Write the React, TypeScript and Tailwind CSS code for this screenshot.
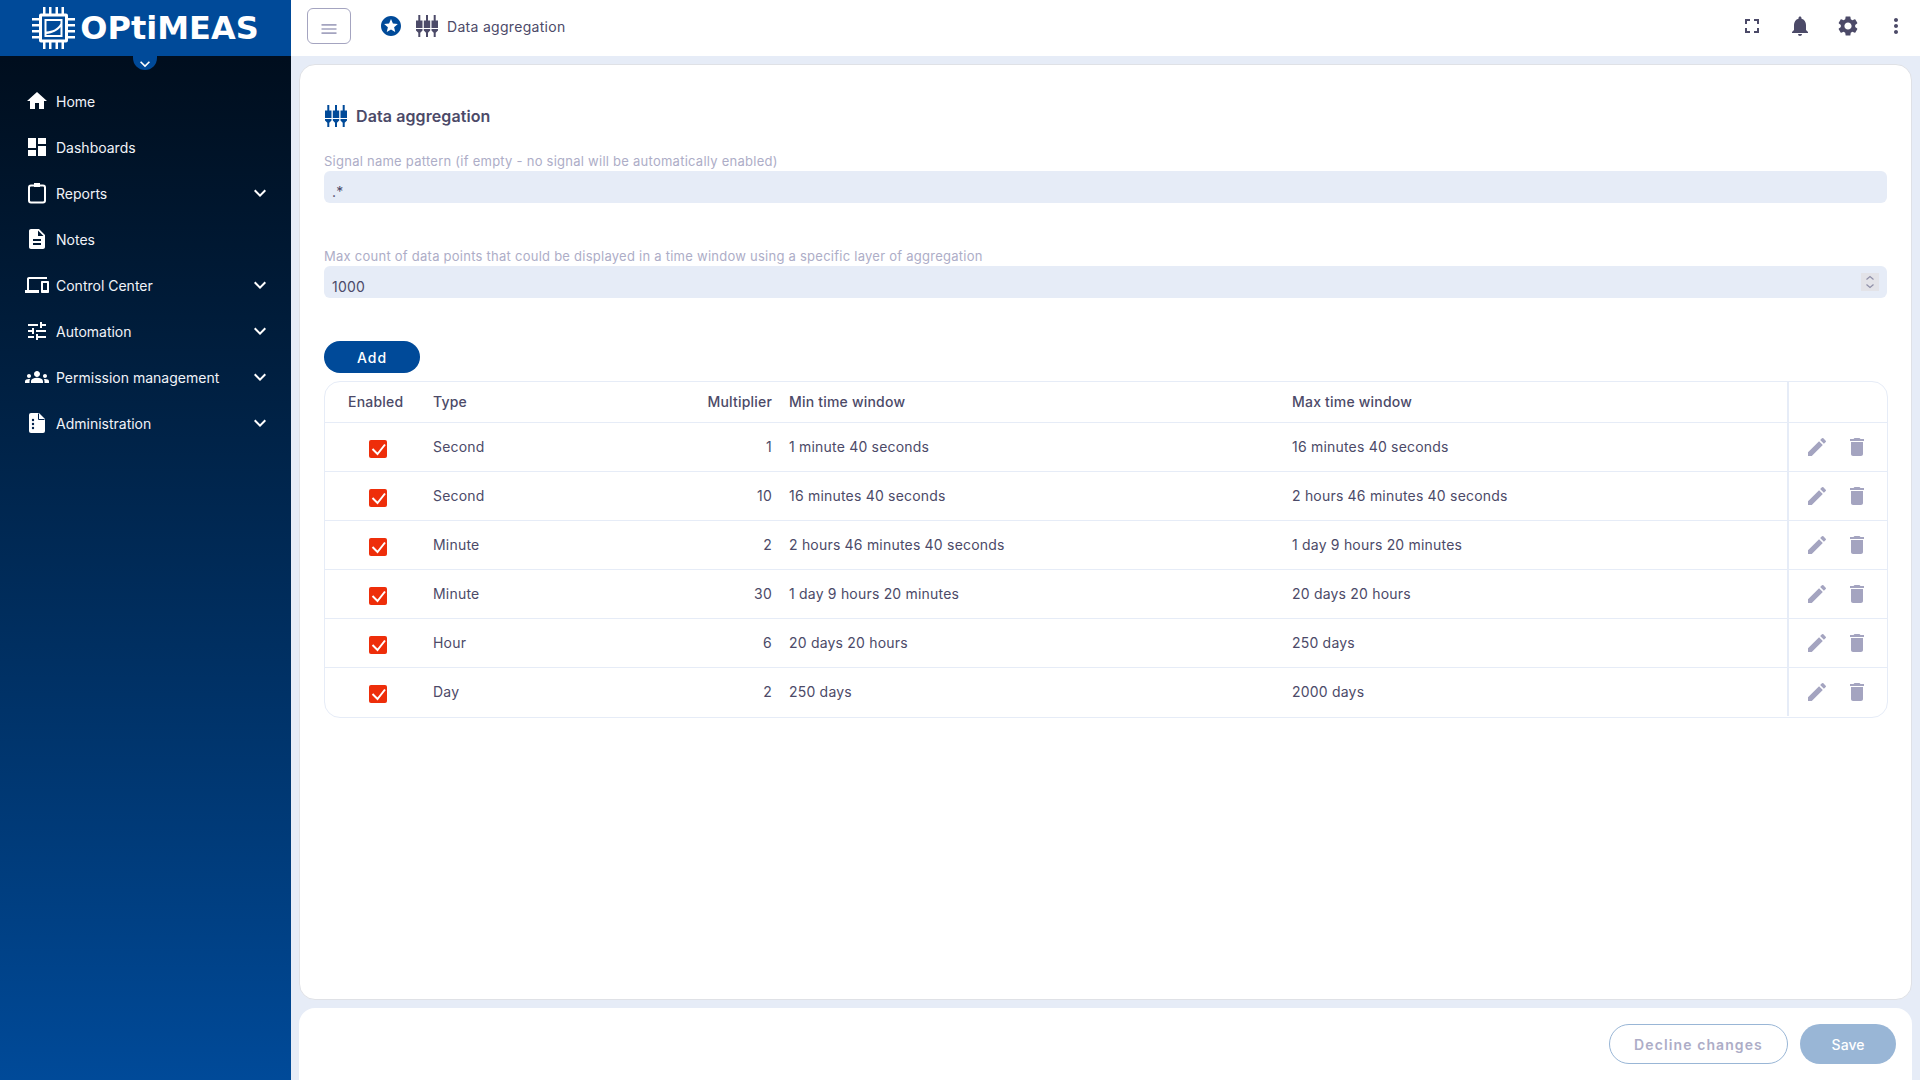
import { ReactNode } from "react";
import {
  MdDashboard,
  MdDelete,
  MdDescription,
  MdDevices,
  MdEdit,
  MdFullscreen,
  MdGroups,
  MdHome,
  MdKeyboardArrowDown,
  MdMenu,
  MdMoreVert,
  MdNotifications,
  MdSettings,
  MdStars,
  MdTune,
} from "react-icons/md";

const ReportsIcon = () => (
  <svg viewBox="0 0 24 24" className="w-6 h-6" fill="none" stroke="currentColor" strokeWidth="2">
    <rect x="4" y="4.5" width="16" height="17" rx="2" />
    <rect x="9.5" y="2.5" width="5" height="3" fill="currentColor" strokeWidth="1" />
  </svg>
);

const AdminIcon = () => (
  <svg viewBox="0 0 24 24" className="w-6 h-6" fill="currentColor">
    <path d="M6 2h8l6 6v12a2 2 0 0 1-2 2H6a2 2 0 0 1-2-2V4a2 2 0 0 1 2-2z" />
    <path d="M13.5 2.5v6h6" fill="none" stroke="#00204a" strokeWidth="1" />
    <circle cx="8" cy="9" r="1.2" fill="#00204a" />
    <circle cx="8" cy="13" r="1.2" fill="#00204a" />
    <circle cx="8" cy="17" r="1.2" fill="#00204a" />
  </svg>
);

const navItems: { label: string; icon: ReactNode; sub?: boolean }[] = [
  { label: "Home", icon: <MdHome size={24} /> },
  { label: "Dashboards", icon: <MdDashboard size={24} /> },
  { label: "Reports", icon: <ReportsIcon />, sub: true },
  { label: "Notes", icon: <MdDescription size={24} /> },
  { label: "Control Center", icon: <MdDevices size={24} />, sub: true },
  { label: "Automation", icon: <MdTune size={24} />, sub: true },
  { label: "Permission management", icon: <MdGroups size={24} />, sub: true },
  { label: "Administration", icon: <AdminIcon />, sub: true },
];

const rows = [
  ["Second", "1", "1 minute 40 seconds", "16 minutes 40 seconds"],
  ["Second", "10", "16 minutes 40 seconds", "2 hours 46 minutes 40 seconds"],
  ["Minute", "2", "2 hours 46 minutes 40 seconds", "1 day 9 hours 20 minutes"],
  ["Minute", "30", "1 day 9 hours 20 minutes", "20 days 20 hours"],
  ["Hour", "6", "20 days 20 hours", "250 days"],
  ["Day", "2", "250 days", "2000 days"],
];

const AggregationIcon = ({ className }: { className: string }) => (
  <svg viewBox="0 0 22 22" className={className} fill="currentColor">
    <path d="M2.3 0h2v5.5h2.2V13H0V5.5h2.3zM10 0h2v5.5h2.2V13H7.8V5.5H10zM17.7 0h2v5.5H22V13h-6.5V5.5h2.2z" />
    <path d="M0 14h6.5v1.5l-2.2 2.3V22h-2v-4.2L0 15.5zM7.8 14h6.4v1.5L12 17.8V22h-2v-4.2l-2.2-2.3zM15.5 14H22v1.5l-2.3 2.3V22h-2v-4.2l-2.2-2.3z" />
  </svg>
);

const Logo = () => (
  <div className="flex items-center justify-center h-14 bg-[#004a99] shrink-0">
    <svg viewBox="0 0 43 42" className="w-[43px] h-[42px] text-white" fill="currentColor">
      <path fillRule="evenodd" d="M9 6.5h25a2 2 0 0 1 2 2v25a2 2 0 0 1-2 2H9a2 2 0 0 1-2-2v-25a2 2 0 0 1 2-2zM10 9.5v23h23v-23z" />
      <path d="M11 0h2.5v7H11zM17 0h2.5v7H17zM23.5 0H26v7h-2.5zM29.5 0H32v7h-2.5zM11 35h2.5v7H11zM17 35h2.5v7H17zM23.5 35H26v7h-2.5zM29.5 35H32v7h-2.5zM0 11h7v2.5H0zM0 17h7v2.5H0zM0 23h7v2.5H0zM0 29h7v2.5H0zM36 11h7v2.5h-7zM36 17h7v2.5h-7zM36 23h7v2.5h-7zM36 29h7v2.5h-7z" />
      <path fillRule="evenodd" d="M12.5 12h18v18h-18zM14.5 14v10.5c6-.5 11-2.5 14-8V14zM14.5 27v1h14v-8c-3 4-8 6.5-14 7z" />
    </svg>
    <span className="ml-[5px] font-['DejaVu_Sans',sans-serif] font-bold text-[32px] leading-none text-white">
      OPtiMEAS
    </span>
  </div>
);

const Sidebar = () => (
  <aside className="relative flex flex-col w-[291px] h-full shrink-0 bg-gradient-to-b from-[#000b18] to-[#004a99]">
    <Logo />
    <div className="absolute left-[133px] top-[56px] flex items-center justify-center w-6 h-[14px] rounded-b-full bg-[#004a99] text-white">
      <MdKeyboardArrowDown size={20} className="mt-[1px]" />
    </div>
    <nav className="flex flex-col pt-[22px]">
      {navItems.map((item) => (
        <div
          key={item.label}
          className="flex items-center h-[46px] pl-[25px] pr-[19px] text-[14px] text-[#f1f3f8]"
        >
          <span className="flex items-center justify-center w-6 text-white">{item.icon}</span>
          <span className="ml-[7px] flex-1">{item.label}</span>
          {item.sub && <MdKeyboardArrowDown size={24} className="text-white" />}
        </div>
      ))}
    </nav>
  </aside>
);

const TopBar = () => (
  <header className="flex items-center h-14 shrink-0 bg-white pl-4 pr-[12px] pb-1 text-[#4c4a68]">
    <button className="flex items-center justify-center w-11 h-9 rounded-md border border-[#a4a4c0] text-[#a4a4c0]">
      <MdMenu size={20} className="mt-[6px]" />
    </button>
    <MdStars size={24} className="ml-7 text-[#004a99]" />
    <AggregationIcon className="w-[22px] h-[22px] ml-[13px]" />
    <span className="ml-[9px] text-[14px] tracking-[0.3px]">Data aggregation</span>
    <div className="flex items-center ml-auto">
      <MdFullscreen size={24} />
      <MdNotifications size={24} className="ml-6" />
      <MdSettings size={24} className="ml-6" />
      <MdMoreVert size={24} className="ml-6" />
    </div>
  </header>
);

const Field = ({ label, value, spin }: { label: string; value: string; spin?: boolean }) => (
  <div>
    <div className="text-[13px] leading-4 text-[#adadc7] tracking-[0.25px]">{label}</div>
    <div className="flex items-center h-8 mt-[2px] pl-2 pr-2 rounded-md bg-[#e6ecf7] text-[14px] text-[#4c4a68]">
      <span className="flex-1 pt-[8px] tracking-[0.2px]">{value}</span>
      {spin && (
        <svg viewBox="0 0 18 18" className="w-[18px] h-[18px] bg-[#e3e3e8]" fill="none" stroke="#8f8fa8" strokeWidth="1.2">
          <path d="M5.5 6.5 9 3.5l3.5 3M5.5 11.5 9 14.5l3.5-3" />
        </svg>
      )}
    </div>
  </div>
);

const gridCols = "grid grid-cols-[108px_227px_112px_17px_503px_495px_100px]";

const Table = () => (
  <div className="mt-2 w-[1564px] pb-px rounded-2xl border border-[#e6ecf7] text-[14px] tracking-[0.2px] text-[#4c4a68]">
    <div className={`${gridCols} h-10 items-center font-medium`}>
      <span className="pl-[23px] pb-[2px]">Enabled</span>
      <span className="pb-[2px]">Type</span>
      <span className="pb-[2px] text-right">Multiplier</span>
      <span />
      <span className="pb-[2px]">Min time window</span>
      <span className="pb-[2px]">Max time window</span>
      <span className="h-full border-l-2 border-[#e6ecf7]" />
    </div>
    {rows.map((row, i) => (
      <div key={i} className={`${gridCols} h-[49px] items-center border-t border-[#e6ecf7]`}>
        <span className="flex justify-center pr-[2px] mt-[3px]">
          <span className="flex items-center justify-center w-[18px] h-[18px] rounded-[2px] bg-[#ee2e0a] text-white">
            <svg viewBox="0 0 18 18" className="w-[18px] h-[18px]" fill="none" stroke="currentColor" strokeWidth="2">
              <path d="M3.5 9l5 5L16 4.5" />
            </svg>
          </span>
        </span>
        <span className="pb-[2px]">{row[0]}</span>
        <span className="pb-[2px] text-right">{row[1]}</span>
        <span />
        <span className="pb-[2px]">{row[2]}</span>
        <span className="pb-[2px]">{row[3]}</span>
        <span className="flex items-center h-full border-l-2 border-[#e6ecf7] pl-[16px] text-[#a4a4c0]">
          <MdEdit size={24} />
          <MdDelete size={24} className="ml-4" />
        </span>
      </div>
    ))}
  </div>
);

export default function App() {
  return (
    <div className="flex w-screen h-screen overflow-hidden bg-[#e6ecf7] font-[Inter,sans-serif]">
      <Sidebar />
      <main className="flex flex-col flex-1 min-w-0">
        <TopBar />
        <div className="flex flex-col flex-1 min-h-0 pl-2 pr-2 pt-2 gap-2">
          <section className="flex-1 min-h-0 rounded-2xl border border-[#dfe1e6] bg-white pl-6 pt-[39px]">
            <div className="flex items-center h-[24px] text-[#4c4a68]">
              <AggregationIcon className="w-[22px] h-[22px] ml-[1px] text-[#004a99]" />
              <span className="ml-[9px] text-[16px] font-semibold tracking-[0.1px]">Data aggregation</span>
            </div>
            <div className="mt-[25px] w-[1563px] flex flex-col gap-[45px]">
              <Field label="Signal name pattern (if empty - no signal will be automatically enabled)" value=".*" />
              <Field label="Max count of data points that could be displayed in a time window using a specific layer of aggregation" value="1000" spin />
            </div>
            <button className="w-24 h-8 mt-[43px] rounded-full bg-[#004a99] text-[14px] font-medium text-white tracking-[1px]">
              Add
            </button>
            <Table />
          </section>
          <footer className="flex items-center justify-end gap-3 h-[72px] shrink-0 rounded-t-2xl bg-white pr-4">
            <button className="w-[179px] h-10 rounded-full border border-[#99b6d6] text-[14px] font-semibold text-[#adadc7] tracking-[1.1px]">
              Decline changes
            </button>
            <button className="w-24 h-10 rounded-full bg-[#99b6d6] text-[14px] font-medium text-white">
              Save
            </button>
          </footer>
        </div>
      </main>
    </div>
  );
}
